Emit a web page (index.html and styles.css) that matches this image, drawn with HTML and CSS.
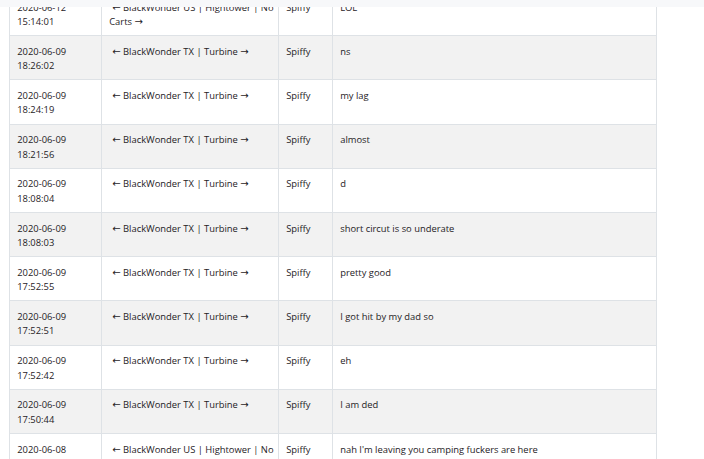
FILE: index.html
```html
<!DOCTYPE html>
<html lang="en">
<head>
<meta charset="utf-8">
<title>Chat log</title>
<link rel="stylesheet" href="styles.css">
</head>
<body>
<div class="topbar"></div>
<main class="page">
  <table class="log">
    <colgroup>
      <col class="c-time">
      <col class="c-server">
      <col class="c-user">
      <col class="c-msg">
    </colgroup>
    <tbody>
      <tr><td>2020-06-12 15:14:01</td><td><span class="arrow lead">←</span> BlackWonder US | Hightower | No Carts <span class="arrow">→</span></td><td>Spiffy</td><td>LOL</td></tr>
      <tr><td>2020-06-09 18:26:02</td><td><span class="arrow lead">←</span> BlackWonder TX | Turbine <span class="arrow">→</span></td><td>Spiffy</td><td>ns</td></tr>
      <tr><td>2020-06-09 18:24:19</td><td><span class="arrow lead">←</span> BlackWonder TX | Turbine <span class="arrow">→</span></td><td>Spiffy</td><td>my lag</td></tr>
      <tr><td>2020-06-09 18:21:56</td><td><span class="arrow lead">←</span> BlackWonder TX | Turbine <span class="arrow">→</span></td><td>Spiffy</td><td>almost</td></tr>
      <tr><td>2020-06-09 18:08:04</td><td><span class="arrow lead">←</span> BlackWonder TX | Turbine <span class="arrow">→</span></td><td>Spiffy</td><td>d</td></tr>
      <tr><td>2020-06-09 18:08:03</td><td><span class="arrow lead">←</span> BlackWonder TX | Turbine <span class="arrow">→</span></td><td>Spiffy</td><td>short circut is so underate</td></tr>
      <tr><td>2020-06-09 17:52:55</td><td><span class="arrow lead">←</span> BlackWonder TX | Turbine <span class="arrow">→</span></td><td>Spiffy</td><td>pretty good</td></tr>
      <tr><td>2020-06-09 17:52:51</td><td><span class="arrow lead">←</span> BlackWonder TX | Turbine <span class="arrow">→</span></td><td>Spiffy</td><td>I got hit by my dad so</td></tr>
      <tr><td>2020-06-09 17:52:42</td><td><span class="arrow lead">←</span> BlackWonder TX | Turbine <span class="arrow">→</span></td><td>Spiffy</td><td>eh</td></tr>
      <tr><td>2020-06-09 17:50:44</td><td><span class="arrow lead">←</span> BlackWonder TX | Turbine <span class="arrow">→</span></td><td>Spiffy</td><td>I am ded</td></tr>
      <tr><td>2020-06-08 12:40:17</td><td><span class="arrow lead">←</span> BlackWonder US | Hightower | No Carts <span class="arrow">→</span></td><td>Spiffy</td><td>nah I'm leaving you camping fuckers are here</td></tr>
    </tbody>
  </table>
</main>
</body>
</html>
```
FILE: styles.css
```css
html, body {
  margin: 0;
  padding: 0;
  background: #ffffff;
}
body {
  font-family: "Open Sans", "Noto Sans", sans-serif;
  font-size: 9.4px;
  line-height: 14.4px;
  color: #1f2226;
  overflow: hidden;
}
.topbar {
  position: fixed;
  top: 0;
  left: 0;
  right: 0;
  height: 7px;
  background: #f7f8fa;
  z-index: 2;
}
.page {
  padding-left: 9px;
  margin-top: -9px;
}
.log {
  border-collapse: collapse;
  table-layout: fixed;
  width: 647px;
}
.c-time { width: 92px; }
.c-server { width: 177px; }
.c-user { width: 54px; }
.c-msg { width: 324px; }
.log td {
  border: 1px solid #dee2e6;
  padding: 8.6px 4px 5.8px 7.2px;
  vertical-align: top;
}
.log tr:nth-child(even) td {
  background: #f2f2f2;
}
.arrow {
  font-family: "DejaVu Sans", sans-serif;
  font-size: 10px;
}
.arrow.lead {
  margin-left: 3px;
}
```
